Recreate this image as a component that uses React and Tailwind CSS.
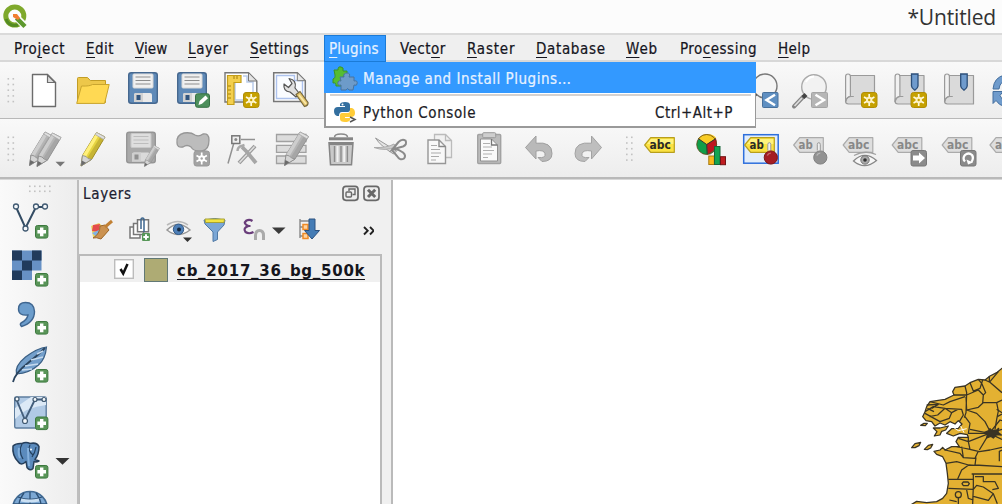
import React from "react";

const UI = "[font-family:'DejaVu_Sans_Condensed','DejaVu_Sans',sans-serif] [font-stretch:condensed] [-webkit-text-stroke:0.2px]";

/* Each icon is drawn in window coordinates; x/y select the slice its cell shows. */
function Icon({ x, y, w = 50, h = 48, children }) {
  return (
    <svg width={w} height={h} viewBox={`${x} ${y} ${w} ${h}`} className="block shrink-0" fill="none">
      {children}
    </svg>
  );
}

function Grip({ x, y, cols, rows, step = 6 }) {
  const dots = [];
  for (let r = 0; r < rows; r++)
    for (let c = 0; c < cols; c++)
      dots.push(<rect key={`${r}-${c}`} x={x + c * 5} y={y + r * step} width="1.6" height="1.6" fill="#c2c2c2" />);
  return <>{dots}</>;
}

function Plus({ x, y }) {
  return (
    <g>
      <rect x={x + 0.5} y={y + 0.5} width="12.4" height="12.6" rx="2" fill="#599558" stroke="#3c793e" />
      <path d={`M${x + 6.7} ${y + 2.6}v8.6M${x + 2.4} ${y + 6.8}h8.6`} stroke="#fff" strokeWidth="3.4" />
    </g>
  );
}

function Star({ x, y, gray }) {
  const c = gray ? "#a3a3a3" : "#c6a100";
  return (
    <g>
      <rect x={x + 0.5} y={y + 0.5} width="15.5" height="15" rx="2.5" fill={c} stroke={gray ? "#999" : "#b08e08"} />
      <g transform={`translate(${x + 8.2} ${y + 8})`} stroke={gray ? "#fff" : "#fff9dd"} strokeWidth="1.7">
        <path d="M0-6V6M-5.2-3L5.2 3M-5.2 3L5.2-3" />
        <circle r="3.2" fill={gray ? "#fff" : "#fff4c4"} stroke="none" />
        <circle r="1.2" fill={c} stroke="none" />
      </g>
    </g>
  );
}

function Floppy({ x, y, gray }) {
  const b = gray ? "#a9a9a9" : "#5f8ab8";
  const s = gray ? "#969696" : "#46688f";
  return (
    <g>
      <rect x={x + 0.7} y={y + 0.7} width="28.6" height="30.6" rx="2.5" fill={b} stroke={s} strokeWidth="1.4" />
      <rect x={x + 5} y={y + 2} width="20" height="14" rx="1" fill={gray ? "#dedede" : "#f0f0f0"} stroke={gray ? "#c8c8c8" : "#d8d8d8"} />
      <path d={`M${x + 7.5} ${y + 5}h15M${x + 7.5} ${y + 8.5}h15M${x + 7.5} ${y + 12}h15`} stroke={gray ? "#bdbdbd" : "#8d8d8d"} strokeWidth="1.2" />
      <path d={`M${x + 6} ${y + 30}v-7q0-2 2-2h14q2 0 2 2v7z`} fill={gray ? "#dadada" : "#eaeaea"} />
      <path d={`M${x + 6} ${y + 30}v-7q0-2 2-2h7v9z`} fill={gray ? "#cfcfcf" : "#d2d2d2"} />
      <rect x={x + 8.5} y={y + 23} width="4" height="5" fill={gray ? "#909090" : "#31557f"} />
    </g>
  );
}

function Pencil({ x, y, body = "#b5b5b5", light = "#cdcdcd", dark = "#949494", s = 1 }) {
  return (
    <g transform={`translate(${x} ${y}) scale(${s})`} strokeLinejoin="round">
      <path d="M0 34.5L1.5 24L15.5 1L24 5.5L10.5 28Z" fill={body} stroke={dark} />
      <path d="M1.5 24L15.5 1L18.5 2.4L4.5 26Z" fill={light} />
      <path d="M6.5 26L20.5 3.5L24 5.5L10.5 28Z" fill={dark} opacity=".45" />
      <path d="M14.2 3L15.5 1L24 5.5L22.6 8Z" fill="#e0e0e0" stroke="#aaa" strokeWidth=".8" />
      <path d="M0 34.5L1.5 24L5 25L7 27L10.5 28Z" fill="#d4d4d4" stroke="#8e8e8e" strokeWidth=".9" />
      <path d="M0 34.5L.8 29L5 31.2Z" fill="#6b6b6b" />
    </g>
  );
}

function Scroll({ x, y }) {
  return (
    <g stroke="#9a9a9a" strokeWidth="1.2" strokeLinejoin="round">
      <path d={`M${x + 5} ${y + 2}h24.5v28.5h-26q-3 0-3-3z`} fill="#dadada" />
      <path d={`M${x + 0.6} ${y + 28}v-25q0-2.5 2.4-2.5t2.4 2.5v20q-4 .5-4.8 5z`} fill="#f1f1f1" />
      <path d={`M${x + 0.8} ${y + 28}q1-5 5-5h3`} />
    </g>
  );
}

function Ribbon({ x, y }) {
  return <path d={`M${x} ${y}h6.5v12q0 2-3.2 4.2q-3.3-2.2-3.3-4.2z`} fill="#6f9bcd" stroke="#2c4f79" strokeWidth="1.3" />;
}

function Tag({ x, y, text = "abc", gray }) {
  return (
    <g>
      <path d={`M${x + 0.7} ${y + 8}l6-7.3h23.6v14.6h-23.6z`} fill={gray ? "#dedede" : "#fbe243"} stroke={gray ? "#ababab" : "#b89f1c"} strokeWidth="1.2" strokeLinejoin="round" />
      {!gray && <path d={`M${x + 3} ${y + 7}l4-5h22.3v5z`} fill="#fff27d" />}
      <text x={x + 5.6} y={y + 12} fontFamily="'DejaVu Sans',sans-serif" fontWeight="700" fontSize="11.5" textLength={text.length * 7.1} lengthAdjust="spacingAndGlyphs" fill={gray ? "#888" : "#2b2b25"}>{text}</text>
    </g>
  );
}

function PinHead({ x, y, color, edge }) {
  return (
    <g>
      <path d={`M${x - 3} ${y - 7}v-6q0-1.8 1.5-1.8t1.5 1.8v6`} fill="#eee" stroke="#999" />
      <circle cx={x} cy={y} r="6.6" fill={color} stroke={edge} />
      <path d={`M${x - 3.5} ${y - 2}q1-2.4 3.5-2.4`} stroke="#fff" strokeOpacity=".35" strokeWidth="1.4" />
    </g>
  );
}

function FileToolbar() {
  return (
    <div className="flex h-[57px] shrink-0 overflow-hidden border-b border-[#b8b8b8] bg-gradient-to-b from-[#f9f9f9] to-[#ededed] pt-1">
      <Icon x={0} y={66} w={19}><Grip x={7.5} y={78} cols={2} rows={5} step={5.7} /></Icon>
      <Icon x={19} y={66}>
        <path d="M32.5 74.5h15l8 8v24h-23z" fill="#fff" stroke="#6c6c6c" strokeWidth="1.4" strokeLinejoin="round" />
        <path d="M47.5 75v7.5h7.5z" fill="#ddd" stroke="#6c6c6c" strokeWidth="1.2" />
      </Icon>
      <Icon x={69} y={66}>
        <path d="M77.5 103.2V78.5q0-1 1-1h9l2.8 3h15.2v22z" fill="#edc74a" stroke="#c29d25" />
        <path d="M76.7 103.4L81.5 86q8 .4 11-1.5h16.7l-4.6 18.9z" fill="#ffd953" stroke="#c9a52f" strokeLinejoin="round" />
      </Icon>
      <Icon x={119} y={66}><Floppy x={128} y={72} /></Icon>
      <Icon x={169} y={66}>
        <Floppy x={177} y={72} />
        <rect x="195.5" y="93.8" width="14" height="13.5" rx="2" fill="#4d8f5c" stroke="#367143" />
        <path d="M198.5 105l1-4 6-5.5 2.5 2.7-6 5.5z" fill="#fff" />
      </Icon>
      <Icon x={219} y={66}>
        <path d="M225 72.7h23.5l8.3 8.3v21h-31.8z" fill="#fff" stroke="#777" strokeWidth="1.4" />
        <path d="M243 76h4v6h6v18h-18V83" stroke="#b9cbea" strokeWidth="1.5" />
        <path d="M248.5 72.7v8.3h8.3z" fill="#e4e4e4" stroke="#777" />
        <path d="M227.5 75.5h13.5v7h-7v22h-6.5z" fill="#f3cf4d" stroke="#c49e19" strokeWidth="1.2" />
        <path d="M234 76v3m3-3v3m-9 7h3m-3 4h3m-3 4h3m-3 4h3" stroke="#a5800c" />
        <Star x={243} y={92} />
      </Icon>
      <Icon x={269} y={66}>
        <path d="M273.7 72.7h23.6l8 8v20.8h-31.6z" fill="#fff" stroke="#777" strokeWidth="1.5" />
        <path d="M276.5 75.5h18v5h8v18h-26z" fill="#fafcff" stroke="#adc2ed" strokeWidth="1.4" />
        <path d="M297.3 72.7v8h8z" fill="#e6e6e6" stroke="#777" />
        <path d="M284 84q-1 7 6 8l6 5 3-4-4-5q2-8-6-9.5l3 5-3.5 4z" fill="#e0e0e0" stroke="#555" strokeWidth="1.2" strokeLinejoin="round" />
        <path d="M296 94.5l4-3 8 11q.5 3-3.5 4z" fill="#e4c66c" stroke="#77683d" strokeWidth="1.2" />
        <path d="M299 95l7 9" stroke="#fae9ae" strokeWidth="1.5" />
      </Icon>
      <div className="w-[423px] shrink-0" />
      <Icon x={742} y={66} w={45}>
        <circle cx="765" cy="86" r="12" fill="#f4f4f4" stroke="#777" strokeWidth="1.4" />
        <path d="M756 94l-9 11" stroke="#444" strokeWidth="3" />
        <rect x="762.5" y="92.5" width="15.5" height="15" rx="1" fill="#5f8fc1" stroke="#48719c" />
        <path d="M775 94.8l-8.5 5.2 8.5 5.2" stroke="#fff" strokeWidth="2.5" />
      </Icon>
      <Icon x={787} y={66}>
        <circle cx="814" cy="87" r="12.3" fill="#f2f2f2" stroke="#aaa" strokeWidth="1.4" />
        <path d="M806 82q2-5 8-5.5" stroke="#fff" strokeWidth="2" />
        <path d="M794 106.5l9.5-10" stroke="#858585" strokeWidth="4" strokeLinecap="round" />
        <path d="M794.5 106l7.5-8" stroke="#ddd" strokeWidth="1.8" />
        <path d="M803 97.5l3-3" stroke="#444" strokeWidth="4" />
        <rect x="811.5" y="92.5" width="16" height="15" rx="1" fill="#b6b6b6" stroke="#a5a5a5" />
        <path d="M815.5 94.8l8.5 5.2-8.5 5.2" stroke="#fff" strokeWidth="2.4" />
      </Icon>
      <Icon x={837} y={66}><Scroll x={845} y={73.5} /><Star x={861} y={92} /></Icon>
      <Icon x={887} y={66}><Scroll x={894.5} y={73.5} /><Ribbon x={911.5} y={74} /><Star x={910.5} y={92} /></Icon>
      <Icon x={937} y={66}><Scroll x={944} y={73.5} /><Ribbon x={960.7} y={74} /></Icon>
      <Icon x={987} y={66} w={15}>
        <path d="M993 89q1-12 12-14v6q-5 1-6 8z" fill="#6f9bcc" stroke="#456f9e" />
        <path d="M993 91.5h10l-3 4q2 5 5 5v6q-6-1-9-6l-3 3z" fill="#6f9bcc" stroke="#456f9e" />
      </Icon>
    </div>
  );
}

function EditToolbar() {
  return (
    <div className="flex h-[60px] shrink-0 overflow-hidden border-b-2 border-[#b9b9b9] bg-gradient-to-b from-[#f9f9f9] to-[#ededed] pt-[7px]">
      <Icon x={0} y={126} w={19}><Grip x={7.5} y={136.5} cols={2} rows={5} step={5.7} /></Icon>
      <Icon x={19} y={126}>
        <Pencil x={29.5} y={131} /><Pencil x={37} y={132} />
        <path d="M55.5 161.8h9.5l-4.7 4.7z" fill="#777" />
      </Icon>
      <Icon x={69} y={126}><Pencil x={81} y={131.5} body="#e6d441" light="#fff07a" dark="#a18e25" /></Icon>
      <Icon x={119} y={126}><Floppy x={126} y={131.5} gray /><Pencil x={144.5} y={145} s={0.62} /></Icon>
      <Icon x={169} y={126}>
        <path d="M177 143q-1-8 7-10 7-1 11 2 4 2 8-1 6-1 6 6 0 10-7 11-8 1-11-4-4-3-8 0-6 1-6-4z" fill="#bcbcbc" stroke="#969696" strokeWidth="1.3" />
        <Star x={193.5} y={150.5} gray />
      </Icon>
      <Icon x={219} y={126}>
        <path d="M228 163.5l6-21M241 139.5h14" stroke="#929292" strokeWidth="1.5" />
        <rect x="231.8" y="135.8" width="8" height="7.7" fill="#eee" stroke="#777" strokeWidth="1.5" />
        <circle cx="235.8" cy="139.6" r="1.5" fill="#888" />
        <path d="M239 163l16-17" stroke="#9a9a9a" strokeWidth="4" /><path d="M239.5 162.5l15-16" stroke="#e0e0e0" strokeWidth="1.6" />
        <path d="M242 147l5 5 9 11" stroke="#a6a6a6" strokeWidth="3.8" />
        <path d="M237.5 151q0-4 4-5l3-1" stroke="#aaa" strokeWidth="2.4" />
      </Icon>
      <Icon x={269} y={126}>
        <path d="M276.5 134.5h29.5v7h-29.5zM276.5 145.3h29.5v7h-29.5zM276.5 156h29.5v7.5h-29.5z" fill="#dcdcdc" stroke="#a1a1a1" strokeWidth="1.3" />
        <Pencil x={284.5} y={131} />
      </Icon>
      <Icon x={319} y={126}>
        <path d="M334.5 137.2q0-3.2 6.5-3.2t6.5 3.2" stroke="#8a8a8a" strokeWidth="1.5" />
        <path d="M329 138.8h24" stroke="#858585" strokeWidth="3" />
        <path d="M329 142.8h24l-1.5 22h-21z" fill="#c9c9c9" stroke="#858585" strokeWidth="1.5" />
        <path d="M329 143.8h24" stroke="#858585" strokeWidth="2.5" />
        <path d="M334.5 146v16M341 146v16M347.4 146v16" stroke="#8c8c8c" strokeWidth="1.4" />
        <path d="M337.5 146v16M344.2 146v16" stroke="#f1f1f1" strokeWidth="2" />
      </Icon>
      <Icon x={369} y={126}>
        <path d="M375.5 138l21 13-3 3q-13-8-18-16z" fill="#e5e5e5" stroke="#999" />
        <path d="M374 147.5q11 4 22-.5l-2-3q-7 4-20 3.5z" fill="#ccc" stroke="#aaa" />
        <path d="M392 150l6.5-8q3.5-3.5 7-1.5 2 4-2.5 6-4 1-7 2zM392 150l5 6q3 5 7 2.5 2.5-3-1-6-4-3-8-3.5" stroke="#8a8a8a" strokeWidth="2" />
      </Icon>
      <Icon x={419} y={126}>
        <path d="M434.5 134.5h11l6 6v17h-17z" fill="#f1f1f1" stroke="#bbb" strokeWidth="1.3" /><path d="M445.5 134.5v6h6" stroke="#bbb" strokeWidth="1.3" />
        <path d="M428 140h11l6.5 6.5v17h-17.5z" fill="#f8f8f8" stroke="#979797" strokeWidth="1.4" />
        <path d="M439 140v6.5h6.5" stroke="#888" strokeWidth="1.4" />
        <path d="M431 145.5h6m-6 4h9m-9 3.5h10m-10 3.5h8m-8 3.5h5" stroke="#aaa" strokeWidth="1.2" />
      </Icon>
      <Icon x={469} y={126}>
        <rect x="477.7" y="134.5" width="23" height="29" rx="1" fill="#bbb" stroke="#a2a2a2" strokeWidth="1.4" />
        <path d="M480.5 139h11l6 6v16h-17z" fill="#fafafa" stroke="#909090" /><path d="M491.5 139v6h6" stroke="#777" strokeWidth="1.3" />
        <rect x="482.7" y="132.7" width="13" height="5" rx="1" fill="#cecece" stroke="#999" />
        <path d="M483 143.5h7m-7 3.5h9m-9 3.5h11m-11 3.5h9m-9 3.5h5" stroke="#b0b0b0" strokeWidth="1.2" />
      </Icon>
      <Icon x={519} y={126}>
        <path d="M525.5 147.5l10.5-11.5v7.2q16-1.8 16 10.3 0 8-10 8l-4-4q8 1 7-3.8-1-4.2-9-2.7v8z" fill="#b9b9b9" stroke="#9f9f9f" strokeLinejoin="round" />
      </Icon>
      <Icon x={569} y={126}>
        <path d="M601.5 147.5l-10-11.5v7.2q-16.5-1.8-16.5 10.3 0 8 10 8l4-4q-8 1-7-3.8 1-4.2 9.5-2.7v8z" fill="#bebebe" stroke="#a3a3a3" strokeLinejoin="round" />
      </Icon>
      <Icon x={619} y={126} w={18}><Grip x={626} y={136.5} cols={2} rows={5} step={5.7} /></Icon>
      <Icon x={637} y={126}><Tag x={644} y={137} /></Icon>
      <Icon x={687} y={126}>
        <circle cx="706.7" cy="144.5" r="10" fill="#0f9d49" />
        <path d="M706.7 144.5l-8.5-6q4-5 9-4.5 6 0 9 4z" fill="#f8cc24" />
        <path d="M706.7 144.5l9.3-6q3.5 11-8.3 15.8z" fill="#bc1720" />
        <path d="M706.7 144.5l-8.5-6m8.5 6l9.3-6m-9.3 6l.5 10" stroke="#333" />
        <circle cx="706.7" cy="144.5" r="10" stroke="#604414" strokeWidth=".8" />
        <rect x="708.8" y="156" width="5.5" height="8.5" fill="#f9b91c" stroke="#a77a10" />
        <rect x="714.5" y="146.5" width="5.5" height="18" fill="#14a451" stroke="#16663a" />
        <rect x="720.5" y="156.7" width="5" height="8" fill="#c01c20" stroke="#701416" />
      </Icon>
      <Icon x={737} y={126}>
        <rect x="743.7" y="134.7" width="34.5" height="28.5" fill="#e2edfa" stroke="#2e6fdc" strokeWidth="1.5" />
        <Tag x={744} y={137} text="ab" /><PinHead x={770.8} y={157.5} color="#a51d23" edge="#78171b" />
      </Icon>
      <Icon x={787} y={126}><Tag x={793} y={137} text="ab" gray /><PinHead x={820.3} y={157.5} color="#929292" edge="#828282" /></Icon>
      <Icon x={837} y={126}>
        <Tag x={842.5} y={137} gray />
        <path d="M853.5 161q11-11 23-.5-12 10-23 .5z" fill="#f7f7f7" stroke="#888" strokeWidth="1.3" /><path d="M854 155.5q11-6 22-1" stroke="#a0a0a0" strokeWidth="1.3" />
        <circle cx="865" cy="160" r="4.2" fill="#aaa" stroke="#777" /><circle cx="865" cy="160" r="1.8" fill="#333" />
      </Icon>
      <Icon x={887} y={126}>
        <Tag x={891.5} y={137} gray />
        <rect x="911" y="150.5" width="15.5" height="15.5" rx="2" fill="#8b8b8b" stroke="#777" />
        <path d="M913 155.5h6v-3l6 5.5-6 5.5v-3h-6z" fill="#fff" />
      </Icon>
      <Icon x={937} y={126}>
        <Tag x={941.5} y={137} gray />
        <rect x="960.5" y="150.5" width="15.5" height="15.5" rx="2" fill="#8b8b8b" stroke="#777" />
        <path d="M965 161.5q-3-3 0-6.5 3.5-3 7 0 2 3-.5 7" stroke="#fff" strokeWidth="2.3" /><path d="M966.5 159.5l1.5 5 5-2z" fill="#fff" />
      </Icon>
      <Icon x={987} y={126} w={15}><Tag x={989.3} y={137} text="a" gray /></Icon>
    </div>
  );
}

function SideToolbar() {
  return (
    <div className="flex w-[79px] shrink-0 flex-col overflow-hidden border-r-2 border-[#bdbdbd] bg-gradient-to-r from-[#fafafa] to-[#ededed]">
      <Icon x={0} y={180} w={77} h={17}><Grip x={29} y={185.5} cols={5} rows={2} step={5} /></Icon>
      <Icon x={0} y={197} w={77}>
        <path d="M16 207l9.5 21 10.5-21h9" stroke="#334c64" strokeWidth="2" />
        <g fill="#f4f7fa" stroke="#415a72" strokeWidth="1.3"><circle cx="16" cy="206.5" r="2.5" /><circle cx="25.5" cy="228.5" r="2.5" /><circle cx="36" cy="206.5" r="2.5" /><circle cx="45" cy="206.5" r="2.5" /></g>
        <Plus x={35} y={225} />
      </Icon>
      <Icon x={0} y={245} w={77}>
        <path d="M12 250.5h29.5v20H32v9.5H12z" fill="#6791c5" />
        <path d="M12 250.5h10v10H12zM32 250.5h9.5v10H32zM22 260.5h10v10H22zM12 270.5h10v9.5H12z" fill="#213b5c" />
        <Plus x={35} y={273} />
      </Icon>
      <Icon x={0} y={293} w={77}>
        <path d="M18.5 309q0-6.5 7-6.5 8.5 0 9 9 0 11-13 15-2-2-.5-3.5 6-3 7-8-9.5 1-9.500-6z" fill="#6c9dcc" stroke="#3f6690" strokeWidth="1.4" />
        <Plus x={35} y={321} />
      </Icon>
      <Icon x={0} y={341} w={77}>
        <path d="M16.5 374q-2-8 9-17 12-9 21-10-1 12-8 18-9 8-22 9z" fill="#739fcb" stroke="#3a5f84" strokeWidth="1.2" />
        <path d="M13 382q2-9 15-19 8-6 17-15" stroke="#2b445e" strokeWidth="1.8" />
        <path d="M25 366l13-2M31 360l12-3M22 370l10-1M37 354l6-3" stroke="#c5daee" strokeWidth="1.4" />
        <Plus x={35} y={369} />
      </Icon>
      <Icon x={0} y={389} w={77}>
        <rect x="14.7" y="397" width="31.5" height="31" rx="1.5" fill="#b1cae5" stroke="#5e7d9e" strokeWidth="1.4" />
        <path d="M15 408l16-11h15v8q-20 2-31 14z" fill="#dce9f6" />
        <path d="M16 398.500l9 21.500L35 399.500h10" stroke="#435e7c" strokeWidth="1.9" />
        <g fill="#f4f7fa" stroke="#415a72" strokeWidth="1.2"><circle cx="17" cy="399" r="2" /><circle cx="25" cy="421" r="2.5" /><circle cx="35" cy="399.5" r="2" /><circle cx="44" cy="399.5" r="2" /></g>
        <Plus x={35} y={416.5} />
      </Icon>
      <Icon x={0} y={437} w={77}>
        <path d="M13 446q3-3 9-2.500 4-2 8 0 7-1.500 9 3 0 8-4 13l4 1.500q-3 1.500-5 .5l-1 7q-3 3-6-1l-1-6q-5 5-8 0-6-6-5-15.500z" fill="#5b8bbd" stroke="#263f5b" strokeWidth="1.5" strokeLinejoin="round" />
        <path d="M22 444q-4 7 1 15m7-14q-3 5 3 10m3-8q-1 6-4 10" stroke="#24415f" strokeWidth="1.2" />
        <path d="M19 448q-1 6 1 10m8-10q0 9 1 18" stroke="#85b1dd" strokeWidth="2" />
        <circle cx="31" cy="449.5" r="1" fill="#fff" /><path d="M55.5 458h14l-7 6.7z" fill="#333" />
        <Plus x={35} y={465} />
      </Icon>
      <Icon x={0} y={485} w={77} h={19}>
        <circle cx="30" cy="509" r="17.500" fill="#7ca8d4" stroke="#426b94" strokeWidth="1.5" />
        <path d="M18 497q12 5 24 0M13 504h34M24 493q-5 7-5 12M36 493q5 7 5 12M30 492v14" stroke="#2d5075" strokeWidth="1.3" />
        <path d="M21 500q9 2 18 0" stroke="#cbe0f3" strokeWidth="3" />
      </Icon>
    </div>
  );
}

function LayersPanel() {
  return (
    <div className="flex w-[314px] shrink-0 flex-col border-r-2 border-[#bababa] bg-[#f0f0f0]">
      <div className="flex h-7 items-center pl-1 pr-[10px]">
        <div className={`${UI} grow text-[15px] tracking-[0.7px] text-[#202030]`}>Layers</div>
        <Icon x={341} y={185} w={40} h={19}>
          <g stroke="#686868" strokeWidth="1.7">
            <rect x="343" y="186.3" width="15" height="14" rx="3" fill="#eee" /><rect x="364" y="186.3" width="15" height="14" rx="3" fill="#eee" />
            <rect x="346" y="192" width="5.5" height="5" rx="1" strokeWidth="1.4" /><path d="M349 191v-2h6v5.5h-2.5" strokeWidth="1.4" />
            <path d="M368 189.8l7.2 7.2m0-7.2l-7.2 7.2" strokeWidth="3" />
          </g>
        </Icon>
      </div>
      <div className="flex h-[46px] shrink-0">
        <Icon x={79} y={208} w={295} h={46}>
          <path d="M91 226l8-3 9 8-4 5-11 1z" fill="#efd65e" /><path d="M93 225l7-1-1 8-7-1z" fill="#e44b4b" /><path d="M92 233l7-3 4 4-5 4z" fill="#80b2e4" />
          <path d="M100 226l5-1 4 5-8 9q-5-2-8-1 7-4 7-12z" fill="#cb9250" stroke="#9c672d" /><path d="M105 227l7-6" stroke="#c18033" strokeWidth="3" />
          <g fill="#fff" stroke="#777" strokeWidth="1.5"><path d="M130 227h10v11h-10z" /><path d="M133.5 223.5h10v11h-10z" /><path d="M137.5 219.7h11v12h-11z" /></g>
          <path d="M141 229v-9q0-2 1.5-2t1.5 2v12" stroke="#3d668e" strokeWidth="1.5" /><rect x="142" y="233" width="8" height="8" rx="1" fill="#579758" /><path d="M146 234.3v5.4m-2.700-2.700h5.400" stroke="#fff" strokeWidth="2" />
          <path d="M167 230q11-11 23 0-12 9-23 0z" fill="#f9f9f9" stroke="#989898" strokeWidth="1.5" /><path d="M167 225q11-7 21 0" stroke="#b9b9b9" strokeWidth="1.5" />
          <circle cx="178.5" cy="229.3" r="5.2" fill="#4e7fb7" stroke="#315a89" /><circle cx="179" cy="229.5" r="2" fill="#16283e" /><path d="M183 237.5h9l-4.5 4.5z" fill="#333" />
          <path d="M204 220q11-3 21 0l-1 5-6.5 7v7.5l-4.5 2v-9.5l-8-8z" fill="#7ba7d6" stroke="#5079a5" /><path d="M205 219h19.5l-.5 3.5h-18.5z" fill="#f2e444" stroke="#a8a334" />
          <path d="M252.5 221q-3-2-6-.5-4 3 2 5.5h2m-2 0q-6 2-3 6 3.5 2.5 8 0" stroke="#693d7a" strokeWidth="2.2" />
          <path d="M255.5 240v-4.5q0-5 4-5t4 5v4.5" stroke="#aaa" strokeWidth="3" /><path d="M272 227.5h13.5l-6.7 6.5z" fill="#3b3b3b" />
          <path d="M300 219v19M300 221h15M300 227h5M300 236h5" stroke="#888" strokeWidth="1.4" /><rect x="303" y="224.5" width="5" height="5" fill="#ffd29e" stroke="#ef8a25" strokeWidth="1.5" /><rect x="303" y="233.5" width="5" height="5" fill="#ffd29e" stroke="#ef8a25" strokeWidth="1.5" />
          <path d="M309 219h6v11.5h4.5l-7.5 8.5-7.5-8.5h4.5z" fill="#457cb5" stroke="#2c5280" />
          <path d="M364 227l3.7 3.7-3.7 3.8m6-7.5l3.7 3.7-3.7 3.8" stroke="#222" strokeWidth="1.9" />
        </Icon>
      </div>
      <div className="mr-[9px] flex grow flex-col border-l border-r-2 border-t-2 border-[#bababa] bg-white">
        <div className="flex h-[26px] shrink-0 items-start bg-[#f0f0f0] pl-[34px] pt-[2px]">
          <svg width="20" height="20" viewBox="0 0 20 20" className="mt-px" fill="none">
            <rect x=".7" y=".7" width="18.6" height="18.6" fill="#fff" stroke="#bcbcbc" strokeWidth="1.4" />
            <path d="M6.5 10l2.7 4.5L13.5 5" stroke="#111" strokeWidth="2.5" />
          </svg>
          <div className="ml-[10px] h-6 w-6 border border-[#617875] bg-[#aeab74]" />
          <div className="ml-[9px] mt-[3px] h-[19px] w-[188px] whitespace-nowrap border-b border-[#15151c] text-[15px] font-bold leading-[20px] tracking-[0.74px] text-[#15151c] [font-family:'DejaVu_Sans',sans-serif]">cb_2017_36_bg_500k</div>
        </div>
      </div>
    </div>
  );
}

function MapCanvas() {
  return (
    <div className="flex grow items-end justify-end bg-white">
      <svg width="112" height="154" viewBox="0 0 336 462" className="block shrink-0" fill="none" stroke="#3a3424" strokeWidth="3.8" strokeLinejoin="round">
        <g fill="#e3b132">
          <path d="M342 50L320 68L300 78L285 90L265 88L240 98L225 108L195 112L188 125L192 135L165 148L140 152L120 155L110 170L105 185L98 200L108 212L125 215L135 228L150 219L165 225L180 215L195 222L205 212L216 222L205 235L185 236L170 250L190 258L210 250L232 254L235 262L205 262L198 275L208 290L185 290L165 300L158 292L150 300L132 304L140 313L158 320L168 340L172 370L175 400L170 430L158 445L140 455L110 458L80 454L60 466H342Z" />
          <path d="M130 234l20 0 25-6-8 12-12 4-5 11-17 3 8-13zM65 293l10-12 17-4-5 10-12 6zM103 298l12-12 13-3-6 11-10 5zM92 226l10-6 10 0-6 7z" />
        </g>
        <path d="M190 232l15 10 25-6M212 228l10 20" stroke="#fff" strokeWidth="3" />
        <path d="M192 135L230 135L265 120L280 135L278 160L265 172L230 180L228 140M225 108l5 20-2 60-5 15M240 98l10 25 20-8 8-25M265 88l10 12 12 28-8 8M298 95L336 128M285 90l13 6 0-18M325 65L298 97M278 158L320 158L336 150M320 158l5 25-5 25-5 30M230 180L260 190L285 215L298 240" />
        <path d="M120 155l40 10 20-10 45-15M110 165l35-2-20 12M112 175l20 10M105 185L130 170L165 175L185 188L178 205L150 215L105 190M118 200l25-5 22-20M165 175L215 178L220 195L208 215M185 188l18-10M225 200L240 220L235 250H298" />
        <path d="M298 250L268 300M298 250L330 210L336 212M298 250L336 238M298 250L336 268M298 250L240 238M298 250L235 275M320 178l16 10M322 200l14-8" />
        <path d="M205 265L235 275L240 298L268 305L300 300L336 292M235 262v14M215 290l5 33 35 2 10-22M165 300L210 310L220 323M200 290l20 4 20 4M258 322L255 345L336 350M168 340L200 335L236 345L255 346M336 300L328 304V334M236 345L215 360L203 387" />
        <path d="M245 372H336M250 372V410L248 462M175 388H250M175 415L250 418M255 380l25 0 0 15 35 0 10 20-18 4M250 418l10-12 20 5 30 20-15 20-45-12M205 443v20M178 450l22 5M310 431l12 30M220 396h14l4 5-4 6h-14l-4-6zM230 420l5 25 15 5" />
        <circle cx="205" cy="434" r="9" />
        <path d="M284 247l12-5 4-6 6 6 14-2 6-5-2 12 10 8-14-1-10 10-8-5-12 5 2-9z" fill="#3a3424" />
      </svg>
    </div>
  );
}

const MENUS = [
  ["", "Pro", "j", "ect", "w-[51px] tracking-[0.750px]"],
  ["", "", "E", "dit", "w-[28px] tracking-[0.500px]"],
  ["", "", "V", "iew", "w-[32px] tracking-[0.100px]"],
  ["", "", "L", "ayer", "w-[41px] tracking-[0.600px]"],
  ["", "", "S", "ettings", "w-[58px] tracking-[0.500px]"],
  ["on", "", "P", "lugins", "w-[52px] tracking-[0.200px]"],
  ["", "Vect", "o", "r", "w-[46px] tracking-[0.500px]"],
  ["", "", "R", "aster", "w-[48px] tracking-[0.800px]"],
  ["", "", "D", "atabase", "w-[69px] tracking-[0.650px]"],
  ["", "", "W", "eb", "w-[33px] tracking-[0.900px]"],
  ["", "Pro", "c", "essing", "w-[77px] tracking-[0.500px]"],
  ["", "", "H", "elp", "w-[32px] tracking-[0.450px]"],
];

function PluginsMenu() {
  return (
    <div className={`${UI} absolute left-[324px] top-[62px] z-10 flex h-[66px] w-[432px] flex-col border-b-2 border-l-2 border-r border-[#999] bg-white text-[15px]`}>
      <div className="-ml-0.5 -mr-px flex h-[31px] shrink-0 items-center bg-[#3399ff] pl-2 text-[#e7f2ff]">
        <Icon x={332} y={62} w={31} h={31}>
          <path d="M334 70l4 0q0-4 3-3 3 0 2 4h4v5h-4q0 3 4 3v7h-11q0-4-3-3v-4q3-1 2-4z" fill="#55bd31" stroke="#3c9426" />
          <path d="M340 77h4q-1-4 3-4t2 4h5v4q4-1 3 3 0 2-3 1l-1 5h-4q-1-3-3 0h-5v-5q-4 1-3-3 1-2 3-1z" fill="#6d9bc9" stroke="#49739e" />
        </Icon>
        <span className="whitespace-nowrap pt-[3px] tracking-[0.530px]">Manage and Install Plugins…</span>
      </div>
      <div className="mx-1 mt-px h-0.5 shrink-0 bg-[#d5d2d0]" />
      <div className="flex grow items-center pl-[6px] pr-[22px] text-[#1c1c26]">
        <Icon x={332} y={98} w={31} h={27}>
          <path d="M340 104q1-2 5-2 5 0 5 3v5q0 2-2 2h-6q-3 0-3 4h-2q-3-1-3-5t4-4h7v-1h-5z" fill="#336f9f" />
          <path d="M350 108h2q3 1 3 5t-4 4h-6v1h5v2q-1 2-5 2-5 0-5-3v-4q0-2 2-2h6q2 0 2-3z" fill="#ffcc38" />
          <circle cx="342.5" cy="104.5" r="1" fill="#fff" /><path d="M350 117l5 2.500-5 2.500" stroke="#555" strokeWidth="1.5" />
        </Icon>
        <span className="grow whitespace-nowrap pt-[4px] tracking-[0.600px]">Python Console</span>
        <span className="whitespace-nowrap pt-[4px] tracking-[0.500px]">Ctrl+Alt+P</span>
      </div>
    </div>
  );
}

export default function App() {
  return (
    <div className="relative flex h-[504px] w-[1002px] flex-col overflow-hidden bg-[#f0f0f0]">
      <header className="flex h-[35px] shrink-0 items-center justify-between border-b-2 border-[#dadada] bg-[#fcfcfc] pl-[2px] pr-[6px]">
        <Icon x={2} y={3} w={27} h={27}>
          <circle cx="14.8" cy="16" r="9" stroke="#7fa92c" strokeWidth="5" /><path d="M6 19q3 8 12 6" stroke="#548b23" strokeWidth="3" />
          <path d="M17 18l8 8" stroke="#fcfcfc" strokeWidth="7" /><path d="M16.5 18l8.5 8.5" stroke="#5d982d" strokeWidth="4.5" />
          <path d="M13 14h4l3 4-2 2-5-3z" fill="#f27d31" />
        </Icon>
        <div className="whitespace-nowrap pt-[3px] text-[21px] tracking-[-0.150px] text-[#333] [font-family:'Open_Sans',sans-serif]">*Untitled</div>
      </header>
      <nav className={`${UI} flex h-[27px] shrink-0 border-b-2 border-[#d8d8d8] bg-[#efefef] pl-[9px] text-[15px] text-[#15151e]`}>
        {MENUS.map(([on, pre, key, post, cls]) => (
          <div key={pre + key + post} className={on ? "z-10 mr-[9px] flex h-[27px] items-center border border-[#1b7bd7] bg-[#3399ff] px-1 pt-px text-[#e7f2ff]" : "mr-[11px] flex h-[27px] items-center px-[5px] pt-px"}>
            <span className={`${cls} block whitespace-nowrap`}>
              {pre}<span className="underline decoration-1 underline-offset-[3px] [text-decoration-skip-ink:none]">{key}</span>{post}
            </span>
          </div>
        ))}
      </nav>
      <FileToolbar />
      <EditToolbar />
      <main className="flex min-h-0 grow border-t border-[#d8d8d8]">
        <SideToolbar />
        <LayersPanel />
        <MapCanvas />
      </main>
      <PluginsMenu />
    </div>
  );
}
